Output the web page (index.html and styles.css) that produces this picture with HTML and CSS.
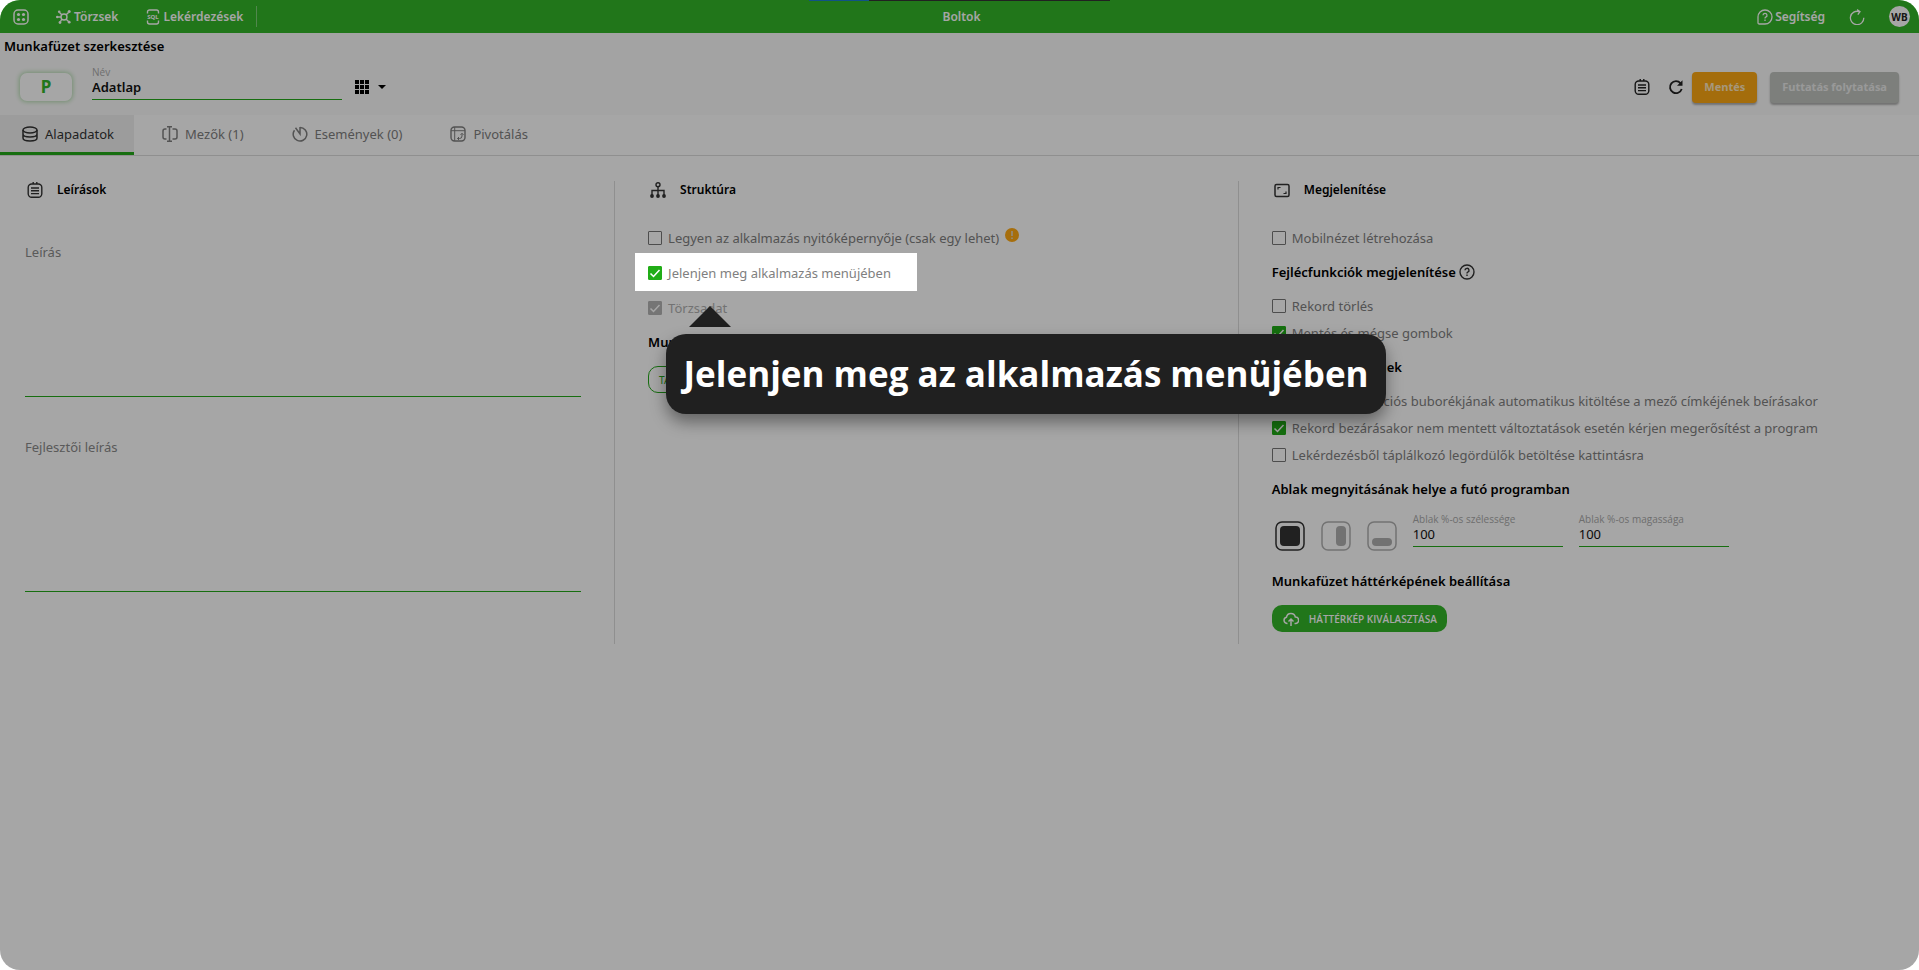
FILE: index.html
```html
<!DOCTYPE html>
<html lang="hu">
<head>
<meta charset="utf-8">
<title>Boltok – Munkafüzet szerkesztése</title>
<link rel="stylesheet" href="styles.css">
</head>
<body>
<div class="app">
  <header class="topbar">
    <span class="loader"></span>
    <nav class="topnav">
      <button class="nav-btn" type="button" aria-label="Alkalmazások">
        <svg class="icon" viewBox="0 0 16 16" fill="none" stroke="currentColor" stroke-width="1.5"><rect x="1" y="1" width="14" height="14" rx="4"/><g fill="currentColor" stroke="none"><circle cx="5.5" cy="5.5" r="1.6"/><circle cx="10.5" cy="5.5" r="1.6"/><circle cx="5.5" cy="10.5" r="1.6"/><circle cx="10.5" cy="10.5" r="1.6"/></g></svg>
      </button>
      <a class="nav-link" href="#torzsek">
        <svg class="icon" viewBox="0 0 16 16" fill="none" stroke="currentColor" stroke-width="1.4"><circle cx="8" cy="8" r="3"/><path d="M5.800 5.800 3.500 3.500M10.200 5.800 12.500 3.500M5.800 10.200 4.500 12.500M10.200 10.200 12.500 12.500M5 8H2"/><g fill="currentColor" stroke="none"><circle cx="3.200" cy="2.800" r="1.300"/><circle cx="13.200" cy="2.500" r="1.500"/><circle cx="4" cy="13.500" r="1.400"/><circle cx="13.200" cy="13.200" r="1.400"/><circle cx="1.200" cy="8" r="1.200"/></g></svg>
        Törzsek</a>
      <a class="nav-link" href="#lekerdezesek">
        <svg class="icon" viewBox="0 0 16 16" fill="none" stroke="currentColor" stroke-width="1.4"><path d="M2.500 4.500V3a2 2 0 0 1 2-2h7a2 2 0 0 1 2 2v1.500M2.500 11.500V13a2 2 0 0 0 2 2h7a2 2 0 0 0 2-2v-1.500"/><text class="sql" x="8" y="10" text-anchor="middle">SQL</text></svg>
        Lekérdezések</a>
      <span class="nav-rule"></span>
    </nav>
    <span class="app-title">Boltok</span>
    <div class="topbar-end">
      <a class="nav-link" href="#segitseg">
        <svg class="icon" viewBox="0 0 16 16" fill="none" stroke="currentColor" stroke-width="1.300"><path d="M1 8a7 7 0 1 1 7 7H2.200A1.200 1.200 0 0 1 1 13.800z"/><path d="M6 6.300a2 2 0 1 1 2.700 1.900c-.5.200-.7.500-.7 1.200M8 10.600v1.300"/></svg>
        Segítség</a>
      <button class="nav-btn" type="button" aria-label="Frissítés">
        <svg class="icon" viewBox="0 0 16 16" fill="none" stroke="currentColor" stroke-width="1.300"><path d="M14.800 8.800A6.700 6.700 0 1 1 10.200 2.600M8 .600l3 2-2.200 3"/></svg>
      </button>
      <button class="avatar" type="button">WB</button>
    </div>
  </header>

  <section class="sheet-head">
    <h1 class="sheet-title">Munkafüzet szerkesztése</h1>
    <div class="toolbar">
      <button class="type-badge" type="button">P</button>
      <div class="field name-field">
        <label for="name">Név</label>
        <input id="name" type="text" value="Adatlap">
      </div>
      <button class="grid-menu" type="button" aria-label="Nézet">
        <svg class="grid-icon" viewBox="0 0 14 14" fill="currentColor"><path d="M0 0h4v4H0zM5 0h4v4H5zM10 0h4v4h-4zM0 5h4v4H0zM5 5h4v4H5zM10 5h4v4h-4zM0 10h4v4H0zM5 10h4v4H5zM10 10h4v4h-4z"/></svg>
        <svg class="caret" viewBox="0 0 10 5" fill="currentColor"><path d="M0 0h10L5 5z"/></svg>
      </button>
      <div class="actions">
        <button class="icon-btn" type="button" aria-label="Leírás">
          <svg class="icon" viewBox="0 0 16 16" fill="none" stroke="currentColor" stroke-width="1.400"><rect x="1.200" y="2" width="13.600" height="13.300" rx="3.500"/><path d="M4 6h8M4 8.800h8M4 11.600h8M6.200 0v2M9.800 0v2"/></svg>
        </button>
        <button class="icon-btn" type="button" aria-label="Újratöltés">
          <svg class="icon" viewBox="0 0 16 16" fill="none" stroke="currentColor" stroke-width="1.800"><path d="M13.700 10A6 6 0 1 1 12.600 4.300"/><path d="M14.500 1.200v5.600H9z" fill="currentColor" stroke="none"/></svg>
        </button>
        <button class="btn btn-save" type="button">Mentés</button>
        <button class="btn btn-run" type="button">Futtatás folytatása</button>
      </div>
    </div>
  </section>

  <nav class="tabs">
    <a class="tab active" href="#alapadatok">
      <svg class="icon" viewBox="0 0 16 16" fill="none" stroke="currentColor" stroke-width="1.500"><ellipse cx="8" cy="4" rx="7" ry="3"/><path d="M1 4v8c0 1.700 3.100 3 7 3s7-1.300 7-3V4M1 8c0 1.700 3.100 3 7 3s7-1.300 7-3"/></svg>
      Alapadatok</a>
    <a class="tab" href="#mezok">
      <svg class="icon" viewBox="0 0 16 16" fill="none" stroke="currentColor" stroke-width="1.500"><path d="M4.500 3H3a2 2 0 0 0-2 2v6a2 2 0 0 0 2 2h1.500M10.500 3H13a2 2 0 0 1 2 2v6a2 2 0 0 1-2 2h-2.500M7.500 1v14M5 .700h5M5 15.300h5"/></svg>
      Mezők (1)</a>
    <a class="tab" href="#esemenyek">
      <svg class="icon" viewBox="0 0 16 16" fill="none" stroke="currentColor" stroke-width="1.500"><path d="M8 1.400A6.800 6.800 0 1 1 2.500 4.200M8 1v7L3.500 1.800"/></svg>
      Események (0)</a>
    <a class="tab" href="#pivotalas">
      <svg class="icon" viewBox="0 0 16 16" fill="none" stroke="currentColor" stroke-width="1.400"><rect x="1" y="1" width="14" height="14" rx="3.500"/><path stroke-width="1" d="M1 4.700h14M4.700 1v14M7.500 12.500h2a2.500 2.500 0 0 0 2.500-2.500V7.500M10.500 8.800 12 7.300l1.500 1.500M9 11l-1.500 1.500L9 14"/></svg>
      Pivotálás</a>
  </nav>

  <main class="columns">
    <section class="column">
      <h2 class="section-title">
        <svg class="icon" viewBox="0 0 16 16" fill="none" stroke="currentColor" stroke-width="1.400"><rect x="1.200" y="2" width="13.600" height="13.300" rx="3.500"/><path d="M4 6h8M4 8.800h8M4 11.600h8M6.200 0v2M9.800 0v2"/></svg>
        Leírások</h2>
      <textarea class="memo" aria-label="Leírás" placeholder="Leírás"></textarea>
      <textarea class="memo" aria-label="Fejlesztői leírás" placeholder="Fejlesztői leírás"></textarea>
    </section>

    <section class="column">
      <h2 class="section-title">
        <svg class="icon" viewBox="0 0 16 16" fill="none" stroke="currentColor" stroke-width="1.400"><circle cx="8" cy="2.700" r="2"/><path d="M8 4.700V13M2 13V8.500h12V13"/><g fill="currentColor" stroke="none"><circle cx="2" cy="14" r="1.900"/><circle cx="8" cy="14" r="1.900"/><circle cx="14" cy="14" r="1.900"/></g></svg>
        Struktúra</h2>
      <div class="checks checks-wide">
        <div class="check-row"><label class="check"><input type="checkbox">Legyen az alkalmazás nyitóképernyője (csak egy lehet)</label>
          <svg class="warn" viewBox="0 0 14 14"><circle cx="7" cy="7" r="7" fill="#ffaa15"/><path d="M7 3v5M7 9.500v1.600" stroke="#ddd" stroke-width="1.400"/></svg></div>
        <div class="check-row spotlit"><label class="check"><input type="checkbox" checked>Jelenjen meg alkalmazás menüjében</label>
          <div class="spotlight"></div>
          <div class="tip-arrow"></div>
          <div class="tip" role="tooltip">Jelenjen meg az alkalmazás menüjében</div>
        </div>
        <div class="check-row"><label class="check disabled"><input type="checkbox" checked disabled>Törzsadat</label></div>
      </div>
      <h3 class="group-title">Munkafüzet</h3>
      <button class="btn-outline" type="button">TALLÓZÁS</button>
    </section>

    <section class="column">
      <h2 class="section-title">
        <svg class="icon" viewBox="0 0 16 16" fill="none" stroke="currentColor" stroke-width="1.500"><rect x="1" y="2.500" width="14" height="12" rx="1.500"/><path stroke-width="1.200" d="M4 7.500V5.500h2.500M12 9.500v2H9.500"/></svg>
        Megjelenítése</h2>
      <div class="checks">
        <label class="check"><input type="checkbox">Mobilnézet létrehozása</label>
      </div>
      <h3 class="group-title">Fejlécfunkciók megjelenítése
        <svg class="icon" viewBox="0 0 16 16" fill="none" stroke="currentColor" stroke-width="1.400"><circle cx="8" cy="8" r="7"/><path d="M6 6.300a2 2 0 1 1 2.700 1.900c-.5.200-.7.500-.7 1.200M8 10.600v1.300"/></svg></h3>
      <div class="checks">
        <label class="check"><input type="checkbox">Rekord törlés</label>
        <label class="check"><input type="checkbox" checked>Mentés és mégse gombok</label>
      </div>
      <h3 class="group-title">További lehetőségek</h3>
      <div class="checks">
        <label class="check"><input type="checkbox">Mezők információs buborékjának automatikus kitöltése a mező címkéjének beírásakor</label>
        <label class="check"><input type="checkbox" checked>Rekord bezárásakor nem mentett változtatások esetén kérjen megerősítést a program</label>
        <label class="check"><input type="checkbox">Lekérdezésből táplálkozó legördülők betöltése kattintásra</label>
      </div>
      <h3 class="group-title">Ablak megnyitásának helye a futó programban</h3>
      <div class="placement">
        <button class="place selected" type="button" aria-label="Teljes ablak"><svg viewBox="0 0 30 30" fill="none" stroke="currentColor" stroke-width="1.500"><rect x="1" y="1" width="28" height="28" rx="6"/><rect x="5" y="5" width="20" height="20" rx="4" fill="currentColor" stroke="none"/></svg></button>
        <button class="place" type="button" aria-label="Jobb oldal"><svg viewBox="0 0 30 30" fill="none" stroke="currentColor" stroke-width="1.500"><rect x="1" y="1" width="28" height="28" rx="6"/><rect x="15" y="5" width="10" height="20" rx="4" fill="currentColor" stroke="none"/></svg></button>
        <button class="place" type="button" aria-label="Alul"><svg viewBox="0 0 30 30" fill="none" stroke="currentColor" stroke-width="1.500"><rect x="1" y="1" width="28" height="28" rx="6"/><rect x="5" y="17" width="20" height="8" rx="4" fill="currentColor" stroke="none"/></svg></button>
        <div class="field size-field"><label for="w">Ablak %-os szélessége</label><input id="w" type="text" value="100"></div>
        <div class="field size-field"><label for="h">Ablak %-os magassága</label><input id="h" type="text" value="100"></div>
      </div>
      <h3 class="group-title">Munkafüzet háttérképének beállítása</h3>
      <button class="btn-upload" type="button">
        <svg class="icon" viewBox="0 0 16 16" fill="none" stroke="currentColor" stroke-width="1.500"><path d="M4.500 12.500H4A3.200 3.200 0 0 1 3.500 6.200 4.500 4.500 0 0 1 12.300 6 3.200 3.200 0 0 1 12.500 12.500h-1M8 15V8.500M5.500 10.500 8 8l2.500 2.500"/></svg>
        HÁTTÉRKÉP KIVÁLASZTÁSA</button>
    </section>
  </main>
</div>
</body>
</html>
```
FILE: styles.css
```css
* { box-sizing: border-box; }

body {
  margin: 0;
  background: #fff;
  font-family: "Noto Sans", sans-serif;
  font-size: 13px;
  line-height: 20px;
  color: #808080;
}

button, input, textarea { font: inherit; color: inherit; }
button { border: 0; padding: 0; background: none; cursor: pointer; }
a { color: inherit; text-decoration: none; }
h1, h2, h3 { margin: 0; color: #000; font-weight: 600; }
svg { display: block; flex: none; }

.icon { width: 16px; height: 16px; }

.app {
  min-height: 100vh;
  border-radius: 20px;
  overflow: hidden;
  background: #fff;
}

/* Top bar */
.topbar {
  position: relative;
  display: grid;
  grid-template-columns: 1fr auto 1fr;
  align-items: center;
  height: 33px;
  padding: 0 9px 0 13px;
  background: #33b528;
  color: #fff;
  font-size: 12px;
  font-weight: 600;
}
.loader {
  position: absolute;
  top: 0;
  left: 50%;
  width: 301px;
  height: 1px;
  margin-left: -151px;
  background: linear-gradient(90deg, #1b7fd0 60px, #333 60px);
}
.topnav, .topbar-end { display: flex; align-items: center; }
.topnav { gap: 27px; }
.topbar-end { justify-content: flex-end; gap: 24px; }
.nav-link { display: flex; align-items: center; gap: 2px; }
.sql { font: 700 6px "Noto Sans", sans-serif; fill: currentColor; stroke: none; }
.nav-rule { width: 1px; height: 21px; margin-left: -14px; background: #7fd078; }
.avatar {
  width: 21px;
  height: 21px;
  border-radius: 50%;
  background: #fff;
  color: #222;
  font-size: 10px;
  font-weight: 700;
}

/* Sheet header */
.sheet-head { height: 82px; background: #fafafa; }
.sheet-title { padding: 3px 0 1px 4px; font-size: 13px; line-height: 20px; }
.toolbar { display: flex; align-items: center; padding: 9px 20px 0 20px; }
.type-badge {
  width: 52px;
  height: 28px;
  margin-right: 20px;
  border-radius: 7px;
  background: #fff;
  box-shadow: 0 0 4px 1px #b4deb0;
  color: #33b528;
  font-size: 17px;
  font-weight: 700;
}
.field { display: flex; flex-direction: column; }
.field label { font-family: "Open Sans", sans-serif; font-size: 10px; line-height: 12px; color: #aaa; }
.field input {
  width: 100%;
  height: 22px;
  padding: 0 0 3px;
  border: 0;
  border-bottom: 1px solid #24a91a;
  border-radius: 0;
  background: none;
  outline: 0;
  color: #111;
}
.name-field { width: 250px; margin-bottom: 8px; }
.name-field input { font-weight: 600; }
.grid-menu { display: flex; align-items: center; gap: 9px; margin-left: 13px; color: #000; }
.grid-icon { width: 14px; height: 14px; }
.caret { width: 8px; height: 4px; }
.actions { display: flex; align-items: center; margin-left: auto; color: #222; }
.icon-btn { margin-right: 18px; }
.icon-btn + .icon-btn { margin-right: 8px; }
.btn {
  height: 31px;
  padding: 0 12px;
  border-radius: 4px;
  box-shadow: 0 2px 2px rgba(0, 0, 0, .3);
  font-family: "Open Sans", sans-serif;
  font-size: 11px;
  font-weight: 700;
}
.btn-save { margin-right: 13px; background: #fca813; color: #ffe9c0; }
.btn-run { background: #c0c4bf; color: #ececec; }

/* Tabs */
.tabs { display: flex; gap: 6px; height: 41px; border-bottom: 1px solid #dcdcdc; }
.tab {
  display: flex;
  align-items: center;
  gap: 7px;
  padding: 0 20px 0 22px;
  border-bottom: 3px solid transparent;
}
.tab.active { background: #f0f0f0; border-color: #24a91a; color: #333; }

/* Columns */
.columns {
  display: grid;
  grid-template-columns: 32% 32.5% 1fr;
  padding-top: 25px;
}
.column { padding: 0 33px 12px; border-left: 1px solid #dcdcdc; }
.column:first-child { padding-left: 25px; border-left: 0; }
.section-title {
  display: flex;
  align-items: center;
  gap: 14px;
  height: 21px;
  padding: 0 0 3px 2px;
  font-size: 12px;
}
.section-title .icon { color: #333; }
.memo {
  display: block;
  width: 100%;
  height: 157px;
  margin-top: 38px;
  padding: 2px 0;
  border: 0;
  border-bottom: 1px solid #24a91a;
  outline: 0;
  resize: none;
  background: none;
}
.memo::placeholder { color: #8a8a8a; }

.checks { display: flex; flex-direction: column; align-items: flex-start; gap: 7px; }
.section-title + .checks { margin-top: 26px; }
.checks-wide { gap: 15px; }
.check-row { display: flex; align-items: flex-start; gap: 6px; }
.check { display: flex; align-items: center; gap: 6px; }
.check input {
  appearance: none;
  flex: none;
  width: 14px;
  height: 14px;
  margin: 0;
  border: 1px solid #777;
  border-radius: 1px;
}
.check input:checked {
  border-color: #21ad17;
  background: #21ad17 url("data:image/svg+xml,%3Csvg xmlns='http://www.w3.org/2000/svg' viewBox='0 0 12 12' fill='none' stroke='white' stroke-width='1.5'%3E%3Cpath d='M1.500 6.500 4.500 9.500 10.500 3'/%3E%3C/svg%3E") center / 12px 12px no-repeat;
}
.check input:disabled { border-color: #b4b4b4; background-color: #b4b4b4; }
.disabled { color: #b0b0b0; }
.warn { width: 14px; height: 14px; }

.group-title {
  display: flex;
  align-items: center;
  gap: 3px;
  height: 20px;
  margin: 14px 0;
  font-size: 13px;
}
.group-title .icon { color: #333; }

.btn-outline {
  height: 27px;
  padding: 0 10px;
  border: 1px solid #24a91a;
  border-radius: 10px;
  color: #24a91a;
  font-size: 10px;
}

/* Spotlight: dims everything but the highlighted row */
.spotlit { position: relative; }
.spotlight {
  position: absolute;
  z-index: 10;
  inset: -10px -26px -8px -13px;
  box-shadow: 0 0 0 4000px rgba(0, 0, 0, .35);
  pointer-events: none;
}
.tip, .tip-arrow { position: absolute; z-index: 11; }
.tip {
  top: 71px;
  left: 18px;
  width: 720px;
  padding: 16px 0;
  border-radius: 20px;
  background: #202020;
  box-shadow: 0 8px 16px rgba(0, 0, 0, .4);
  color: #fff;
  font-family: "Open Sans", sans-serif;
  font-size: 35px;
  font-weight: 700;
  line-height: 48px;
  text-align: center;
  white-space: nowrap;
}
.tip-arrow {
  top: 43px;
  left: 41px;
  border: solid transparent;
  border-width: 0 21px 21px;
  border-bottom-color: #202020;
}

/* Window placement */
.placement { display: flex; align-items: flex-start; gap: 16px; min-height: 44px; }
.place { width: 30px; height: 30px; margin-top: 8px; color: #b0b0b0; }
.place:first-child { margin-left: 3px; }
.place.selected { color: #333; }
.size-field { width: 150px; }

.btn-upload {
  display: flex;
  align-items: center;
  gap: 10px;
  height: 27px;
  padding: 0 10px 0 11px;
  border-radius: 10px;
  background: #33b528;
  color: #fff;
  font-family: "Open Sans", sans-serif;
  font-size: 10px;
  font-weight: 600;
}
```
